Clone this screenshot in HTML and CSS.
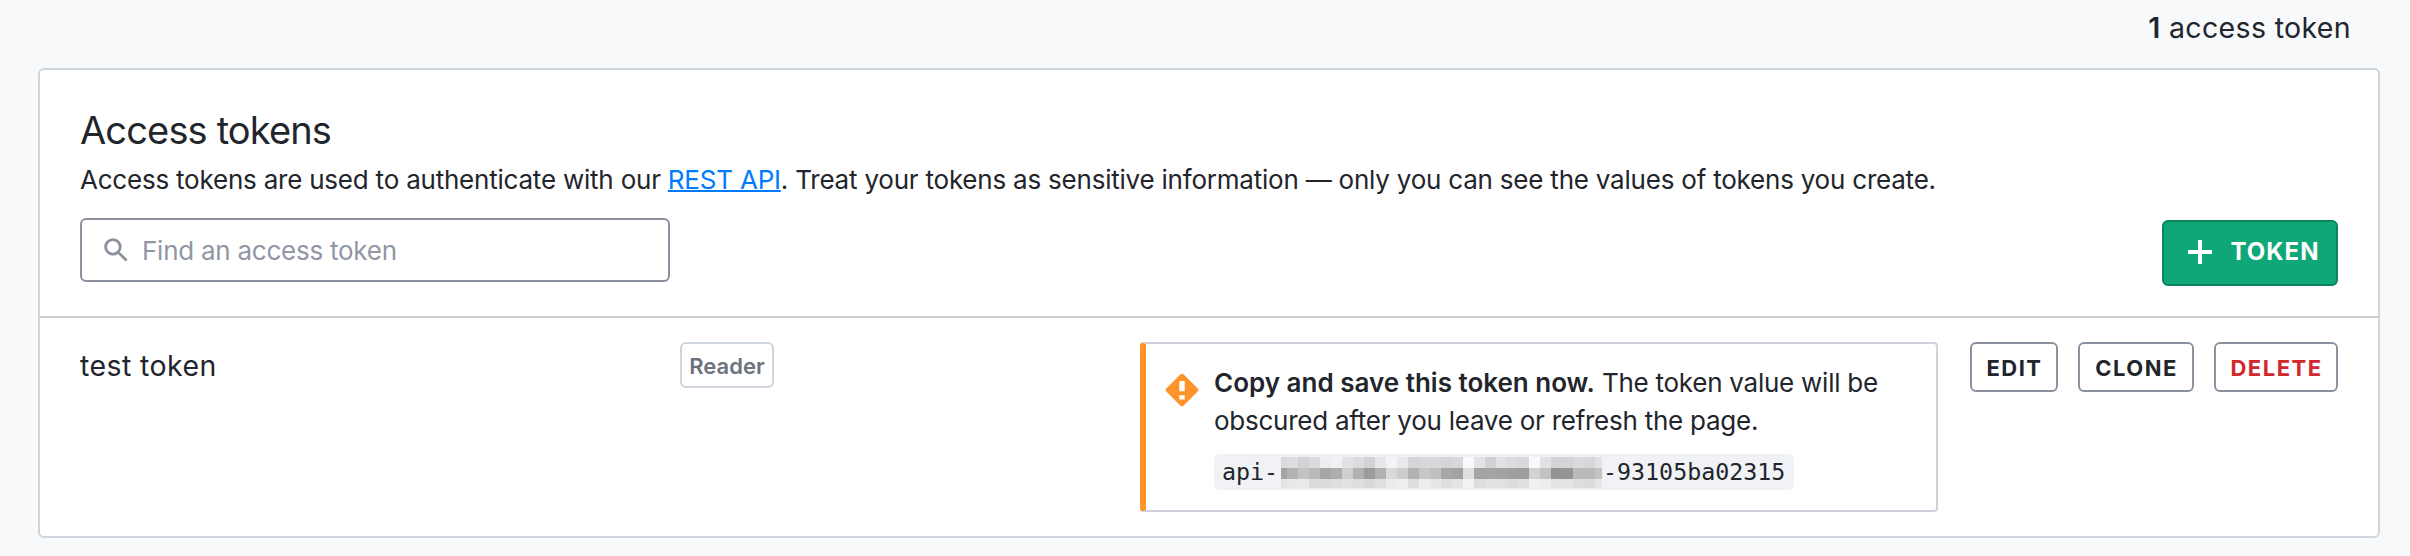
FILE: index.html
```html
<!DOCTYPE html>
<html lang="en">
<head>
<meta charset="utf-8">
<title>Access tokens</title>
<link rel="stylesheet" href="styles.css">
</head>
<body>
<p class="count"><strong>1</strong> access token</p>
<section class="card">
  <header class="card-header">
    <h1 class="title">Access tokens</h1>
    <p class="description">Access tokens are used to authenticate with our <a class="link" href="#">REST API</a>. Treat your tokens as sensitive information — only you can see the values of tokens you create.</p>
    <div class="toolbar">
      <label class="search">
        <svg class="search-icon" width="24" height="24" viewBox="0 0 24 24"><circle cx="8.9" cy="8.9" r="7.3"/><path d="M14 14l8.6 8.6"/></svg>
        <input class="search-input" type="text" placeholder="Find an access token">
      </label>
      <button class="button button-primary"><svg class="plus" width="24" height="24" viewBox="0 0 24 24"><path d="M12 0v24M0 12h24"/></svg><span>TOKEN</span></button>
    </div>
  </header>
  <div class="row">
    <div class="name">test token</div>
    <div class="role"><span class="badge">Reader</span></div>
    <div class="alert">
      <svg class="alert-icon" width="34" height="34" viewBox="0 0 34 34"><rect x="4.8" y="4.8" width="24.4" height="24.4" rx="2.5" transform="rotate(45 17 17)" fill="#ff932b"/><path d="M14.3 8h5.4v10.3h-5.4zM14.3 22.2h5.4v4.2h-5.4z" fill="#fff"/></svg>
      <div class="alert-body">
        <p class="alert-text"><strong>Copy and save this token now.</strong> The token value will be<br>obscured after you leave or refresh the page.</p>
        <code class="token"><span class="token-start">api-</span><svg class="mosaic" width="321" height="31" viewBox="0 0 321 31" shape-rendering="crispEdges"></svg><span class="token-end">-93105ba02315</span></code>
      </div>
    </div>
    <div class="actions">
      <button class="button edit">EDIT</button>
      <button class="button clone">CLONE</button>
      <button class="button delete">DELETE</button>
    </div>
  </div>
</section>
<script src="mosaic.js"></script>
</body>
</html>
```
FILE: mosaic.js
```js
// Grey levels of the blocks that hide the middle of the token, row by row.
const rows = [
  { y: 0, h: 11, levels: "d9 dd d2 d9 ec f0 e1 db d1 e6 f3 e7 d4 d7 d7 d4 d7 f8 e2 d1 e0 db d8 f8 e0 d3 d3 d9 d6 e1" },
  { y: 11, h: 11, levels: "a3 b2 c2 b8 a6 ad ce b0 9a b0 d8 cc b0 c5 bf a6 a1 de a3 a3 a1 9e 9c d1 c2 92 94 b9 b9 c3" },
  { y: 22, h: 9, levels: "e2 e7 e9 da db dd e1 dd d8 de ea ed dd ec e6 dd e3 f1 dc e1 e0 dc df ef ec e3 e3 dc da e6" }
];
const mosaic = document.querySelector(".mosaic");
rows.forEach(({ y, h, levels }) => {
  levels.split(" ").forEach((level, i) => {
    const grey = parseInt(level, 16);
    const rect = document.createElementNS("http://www.w3.org/2000/svg", "rect");
    rect.setAttribute("x", i * 11 - 5);
    rect.setAttribute("y", y);
    rect.setAttribute("width", 11);
    rect.setAttribute("height", h);
    rect.setAttribute("fill", `rgb(${grey},${grey + 1},${grey + 3})`);
    mosaic.appendChild(rect);
  });
});
```
FILE: styles.css
```css
* { box-sizing: border-box; }
body { margin: 0; height: 556px; overflow: hidden; background: #f7f9fb; color: #22252b; font-family: Inter, sans-serif; }
p, h1 { margin: 0; font-weight: 400; }
strong { font-weight: 600; }
.count { height: 68px; padding: 11px 59px 0 0; text-align: right; font-size: 28.5px; line-height: 34px; letter-spacing: 0.35px; }
.card { width: 2342px; height: 470px; margin-left: 38px; background: #fff; border: 2px solid #ced5dd; border-radius: 6px; }
.card-header { height: 248px; padding: 36px 40px 0; border-bottom: 2px solid #ccc; }
.title { font-size: 38px; line-height: 48px; letter-spacing: -0.85px; }
.description { margin-top: 8px; font-size: 26px; line-height: 36px; letter-spacing: -0.215px; white-space: nowrap; }
.link { color: #007bff; text-decoration: underline; text-decoration-thickness: 2px; }
.toolbar { display: flex; justify-content: space-between; align-items: flex-start; margin-top: 20px; }
.search { display: flex; align-items: center; gap: 14px; width: 590px; height: 64px; padding-left: 22px; border: 2px solid #8b919e; border-radius: 6px; }
.search-icon { fill: none; stroke: #8b919e; stroke-width: 2.8; }
.search-input { flex: 1; min-width: 0; padding: 2px 0 0; border: 0; outline: 0; background: none; font: 26px/34px Inter, sans-serif; letter-spacing: -0.25px; }
.search-input::placeholder { color: #9097a3; opacity: 1; }
.button { display: flex; align-items: center; justify-content: center; height: 50px; padding: 2px 0 0 1px; border: 2px solid #8b919e; border-radius: 6px; background: #fff; color: #22252b; font: 700 22px/30px Inter, sans-serif; letter-spacing: 1.5px; }
.button-primary { width: 176px; height: 66px; margin-top: 2px; gap: 19px; padding: 0 0 2px 7px; border-color: #0b8460; background: #0fa678; color: #fff; font-size: 24px; letter-spacing: 1px; }
.plus { stroke: #fff; stroke-width: 4; }
.row { display: flex; align-items: flex-start; padding: 24px 40px 0; }
.name { width: 600px; padding-top: 1px; font-size: 28.5px; line-height: 46px; letter-spacing: 0.4px; }
.role { width: 460px; }
.badge { display: flex; align-items: center; justify-content: center; width: 94px; height: 46px; padding-top: 1px; border: 2px solid #ced5dd; border-radius: 6px; color: #6c727e; font-size: 22px; font-weight: 600; }
.alert { display: flex; gap: 15px; width: 798px; height: 170px; padding: 20px 0 0 19px; border: 2px solid #ced2dd; border-left: 6px solid #ff932b; border-radius: 4px; }
.alert-icon { margin-top: 9px; }
.alert-text { font-size: 26px; line-height: 38px; letter-spacing: -0.25px; white-space: nowrap; }
.alert-text strong { letter-spacing: 0; }
.token { display: flex; align-items: center; width: 580px; height: 36px; margin-top: 14px; border-radius: 6px; background: #f1f2f5; font-family: "DejaVu Sans Mono", monospace; font-size: 23.3px; }
.token-start { width: 59px; margin-left: 8px; padding-bottom: 2px; }
.token-end { padding: 0 0 2px 1px; }
.mosaic { flex: none; }
.actions { display: flex; gap: 20px; margin-left: 32px; }
.edit { width: 88px; }
.clone { width: 116px; }
.delete { width: 124px; color: #d0282c; }
```
